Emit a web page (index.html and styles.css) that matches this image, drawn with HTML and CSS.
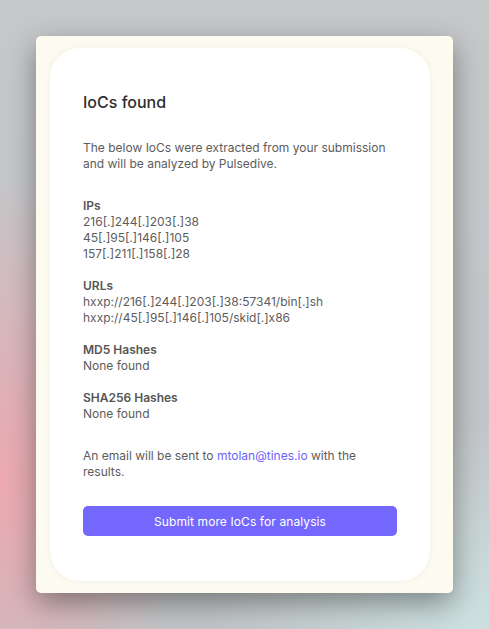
FILE: index.html
```html
<!DOCTYPE html>
<html lang="en">
  <head>
    <meta charset="UTF-8" />
    <meta name="viewport" content="width=device-width, initial-scale=1.0" />
    <title>IoCs found</title>
    <link rel="stylesheet" href="styles.css">
  </head>
  <body>
    <div id="panel">
      <div id="card">
        <h1 id="title">IoCs found</h1>
        <p class="intro">
          The below IoCs were extracted from your submission and will be analyzed by Pulsedive.
        </p>
        <section class="group">
          <p class="label">IPs</p>
          <p>216[.]244[.]203[.]38</p>
          <p>45[.]95[.]146[.]105</p>
          <p>157[.]211[.]158[.]28</p>
        </section>
        <section class="group">
          <p class="label">URLs</p>
          <p>hxxp://216[.]244[.]203[.]38:57341/bin[.]sh</p>
          <p>hxxp://45[.]95[.]146[.]105/skid[.]x86</p>
        </section>
        <section class="group">
          <p class="label">MD5 Hashes</p>
          <p>None found</p>
        </section>
        <section class="group">
          <p class="label">SHA256 Hashes</p>
          <p>None found</p>
        </section>
        <p class="outro">
          An email will be sent to <a href="#">mtolan@tines.io</a> with the results.
        </p>
        <button id="submit">Submit more IoCs for analysis</button>
      </div>
    </div>
  </body>
</html>
```

FILE: styles.css
```css
* {
  padding: 0;
  margin: 0;
  box-sizing: border-box;
}

html,
body {
  height: 100%;
}

body {
  padding: 36px;
  font-family: Inter, "Noto Sans", Arial, sans-serif;
  font-size: 12px;
  line-height: 16px;
  color: #5c5c5c;
  background-color: #c5c7ca;
  background-image:
    radial-gradient(ellipse 190px 300px at 0px 480px, rgba(236, 168, 175, 1), rgba(236, 168, 175, 0)),
    radial-gradient(ellipse 280px 210px at 489px 629px, rgba(205, 225, 224, 1), rgba(205, 225, 224, 0)),
    linear-gradient(180deg, #c6c7c9 0%, #c3c5c8 60%, #c0c4c6 100%);
  overflow: hidden;
}

#panel {
  width: 417px;
  height: 557px;
  padding: 12px 23px 12px 14px;
  background-color: #fdfbef;
  border-radius: 5px;
  box-shadow: 0 10px 28px rgba(0, 0, 0, 0.38);
}

#card {
  height: 100%;
  padding: 44px 33px 44px 33px;
  background-color: #fff;
  border-radius: 30px;
  box-shadow: 0 0 6px rgba(0, 0, 0, 0.05);
  display: flex;
  flex-direction: column;
}

#title {
  font-size: 16px;
  line-height: 20px;
  font-weight: 500;
  color: #2e2e2e;
}

.intro {
  margin-top: 28px;
  margin-bottom: 10px;
}

.group {
  margin-top: 16px;
}

.label {
  font-weight: 600;
  color: #555;
}

.outro {
  margin-top: 26px;
}

.outro a {
  color: #6b62fb;
  text-decoration: none;
}

#submit {
  margin-top: 26px;
  height: 30px;
  width: 100%;
  border: none;
  border-radius: 5px;
  background-color: #7367fe;
  color: #fff;
  font-family: Inter, "Noto Sans", Arial, sans-serif;
  font-size: 12px;
  letter-spacing: 0.1px;
}
```
